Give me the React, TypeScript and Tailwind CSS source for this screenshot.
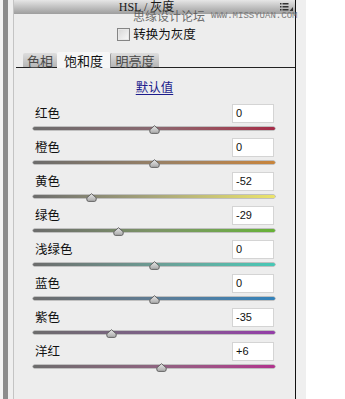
import React from "react";

const CJK = '"Noto Sans CJK SC", "Noto Sans", sans-serif';

type Row = { label: string; value: number; text: string; track: string };

const rows: Row[] = [
  { label: "红色", value: 0, text: "0", track: "bg-linear-to-r from-[#6c6c6c] via-[#8a6870] to-[#a52a48]" },
  { label: "橙色", value: 0, text: "0", track: "bg-linear-to-r from-[#6c6c6c] via-[#968066] to-[#c8843a]" },
  { label: "黄色", value: -52, text: "-52", track: "bg-linear-to-r from-[#6c6c6c] via-[#a8a67a] to-[#ece46a]" },
  { label: "绿色", value: -29, text: "-29", track: "bg-linear-to-r from-[#6c6c6c] via-[#7c9466] to-[#66b234]" },
  { label: "浅绿色", value: 0, text: "0", track: "bg-linear-to-r from-[#6c6c6c] via-[#6c9c94] to-[#46c8b6]" },
  { label: "蓝色", value: 0, text: "0", track: "bg-linear-to-r from-[#6c6c6c] via-[#5e7c94] to-[#3282ba]" },
  { label: "紫色", value: -35, text: "-35", track: "bg-linear-to-r from-[#6c6c6c] via-[#7e6088] to-[#943ca8]" },
  { label: "洋红", value: 6, text: "+6", track: "bg-linear-to-r from-[#6c6c6c] via-[#8e6480] to-[#b2328e]" },
];

function Thumb({ value }: { value: number }) {
  const x = 121 + value * 1.21 - 5.5;
  return (
    <svg
      width="11"
      height="9"
      viewBox="0 0 11 9"
      className="absolute top-[-2px]"
      style={{ left: `${x}px` }}
    >
      <defs>
        <linearGradient id="tg" x1="0" y1="0" x2="0" y2="1">
          <stop offset="0" stopColor="#e8e8e8" />
          <stop offset="1" stopColor="#a8a8a8" />
        </linearGradient>
      </defs>
      <path
        d="M5.5 0.7 L10.2 4.8 Q10.7 8.4 8.6 8.4 L2.4 8.4 Q0.3 8.4 0.8 4.8 Z"
        fill="url(#tg)"
        stroke="#5a5a5a"
        strokeWidth="0.9"
      />
    </svg>
  );
}

function SliderRow({ row }: { row: Row }) {
  return (
    <div className="h-[34px] flex flex-col">
      <div className="h-[19px] flex items-center justify-between pl-[21px] pr-[21px]">
        <span className="text-[12.5px] leading-none text-[#111] whitespace-nowrap" style={{ fontFamily: CJK }}>
          {row.label}
        </span>
        <div
          className="w-[42px] h-[19px] bg-white border border-[#d4d4d4] flex items-center pl-[3px] text-[11px] text-[#111]"
          style={{ fontFamily: '"Liberation Sans", Arial, sans-serif' }}
        >
          {row.text}
        </div>
      </div>
      <div className="relative mt-[4px] ml-[19px] mr-[20px] h-[3px]">
        <div className={`h-[3px] rounded-full ${row.track} shadow-[0_0_0_0.5px_rgba(60,60,60,0.5)]`} />
        <Thumb value={row.value} />
      </div>
    </div>
  );
}

export default function App() {
  return (
    <div className="w-[345px] h-[399px] overflow-hidden bg-white flex">
      <div className="w-[3px] h-full bg-[#f4f4f4]" />
      <div className="w-[5px] h-full bg-[#8c8c8c]" />
      <div className="w-[5px] h-full bg-[#efefef]" />
      <div className="relative w-[283px] h-full bg-[#ededed] border-l border-[#c4c4c4] border-r border-r-[#111] flex flex-col">
        {/* header */}
        <div className="h-[14px] bg-linear-to-b from-[#e6e6e6] to-[#9e9e9e] flex items-center justify-center pr-[16px] relative">
          <span
            className="text-[12px] leading-none text-[#1a1a1a] whitespace-nowrap"
            style={{ fontFamily: '"Liberation Serif", "Noto Sans CJK SC", serif' }}
          >
            HSL / 灰度
          </span>
          <svg width="13" height="8" viewBox="0 0 13 8" className="absolute right-[2px] top-[3px]">
            <rect x="0" y="0" width="1.5" height="1.5" fill="#333" />
            <rect x="0" y="3" width="1.5" height="1.5" fill="#333" />
            <rect x="0" y="6" width="1.5" height="1.5" fill="#333" />
            <rect x="2.5" y="0" width="6" height="1.5" fill="#333" />
            <rect x="2.5" y="3" width="6" height="1.5" fill="#333" />
            <rect x="2.5" y="6" width="6" height="1.5" fill="#333" />
            <path d="M13 4 L13 8 L9.5 8 Z" fill="#333" />
          </svg>
        </div>
        {/* watermark */}
        <div className="absolute left-[119px] top-[10px] flex items-center gap-[6px] pointer-events-none whitespace-nowrap">
          <span className="text-[12px] leading-none text-[#4a4a4a]/80 whitespace-nowrap" style={{ fontFamily: CJK }}>
            思缘设计论坛
          </span>
          <span
            className="text-[9px] leading-none text-[#7a7a7a] whitespace-nowrap"
            style={{ fontFamily: '"Liberation Mono", monospace' }}
          >
            WWW.MISSYUAN.COM
          </span>
        </div>
        {/* checkbox */}
        <div className="mt-[14px] h-[13px] flex items-center justify-center pl-[4px] gap-[3px]">
          <div className="w-[13px] h-[13px] border border-[#858585] bg-linear-to-br from-[#d6d6d6] to-[#fafafa] shadow-[inset_0_0_0_1px_#e8e8e8]" />
          <span className="text-[12.5px] leading-none text-[#111] whitespace-nowrap" style={{ fontFamily: CJK }}>
            转换为灰度
          </span>
        </div>
        {/* tabs */}
        <div className="mt-[11px] h-[16px] flex items-end pl-[2px]">
          <div className="w-[5px] h-[1px] bg-[#222]" />
          <div className="w-[2px] h-[1px] bg-[#222]" />
          <div
            className="w-[34px] h-[15px] border-b border-b-[#222] rounded-t-[2px] bg-linear-to-b from-[#dedede] to-[#b6b6b6] flex items-center justify-center text-[13px] leading-none text-[#4a4a4a]"
            style={{ fontFamily: CJK }}
          >
            色相
          </div>
          <div
            className="w-[53px] h-[16px] rounded-t-[2px] bg-[#f6f6f6] flex items-center justify-center text-[13px] leading-none text-[#111]"
            style={{ fontFamily: CJK }}
          >
            饱和度
          </div>
          <div
            className="w-[49px] h-[15px] border-b border-b-[#222] border-l border-l-[#9a9a9a] rounded-t-[2px] bg-linear-to-b from-[#dedede] to-[#b6b6b6] flex items-center justify-center text-[13px] leading-none text-[#4a4a4a]"
            style={{ fontFamily: CJK }}
          >
            明亮度
          </div>
          <div className="flex-1 h-[1px] bg-[#222]" />
        </div>
        {/* default link */}
        <div className="mt-[11px] h-[16px] flex items-center justify-center">
          <span
            className="text-[12.5px] leading-none text-[#1c1c8c] underline underline-offset-[2px]"
            style={{ fontFamily: CJK }}
          >
            默认值
          </span>
        </div>
        {/* rows */}
        <div className="mt-[9px] flex flex-col">
          {rows.map((r) => (
            <SliderRow key={r.label} row={r} />
          ))}
        </div>
      </div>
      <div className="w-[10px] h-full bg-[#efefef]" />
      <div className="flex-1 h-full bg-white" />
    </div>
  );
}
